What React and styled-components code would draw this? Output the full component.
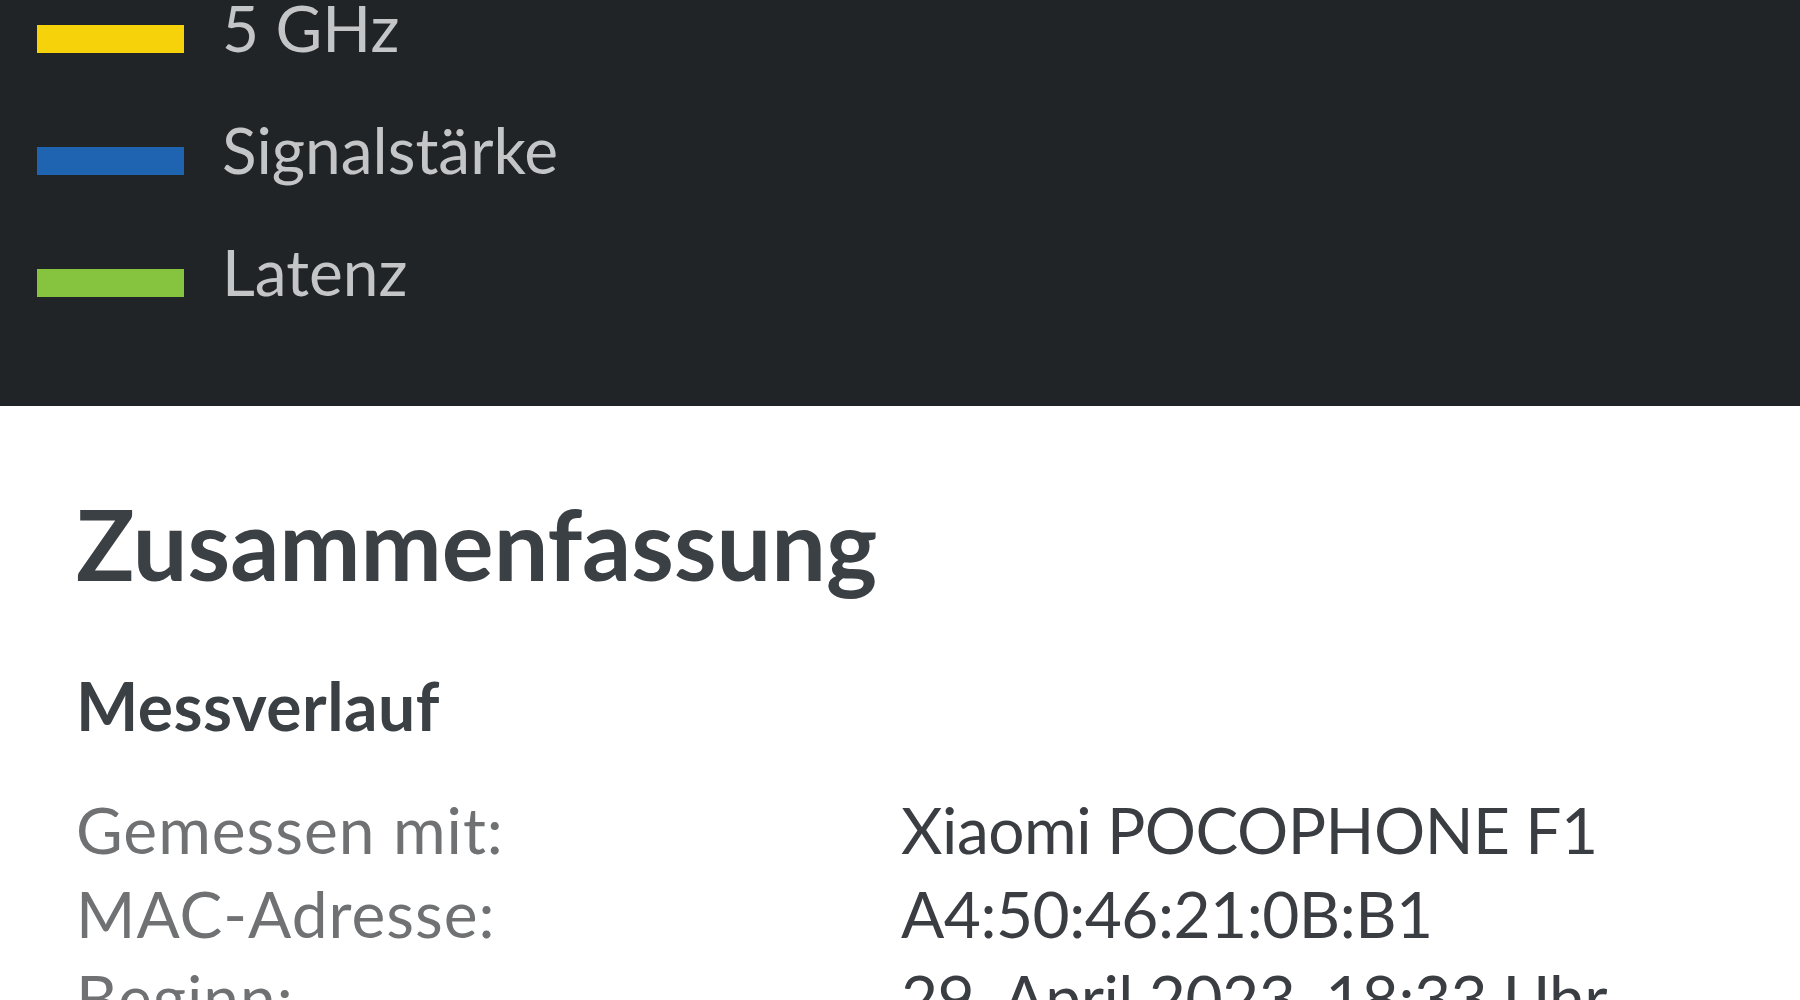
import React from 'react'
import styled, { createGlobalStyle } from 'styled-components'

const GlobalStyle = createGlobalStyle`
	html, body {
		margin: 0;
		padding: 0;
		background: #ffffff;
		overflow: hidden;
	}
	body {
		font-family: Lato, 'Noto Sans', sans-serif;
	}
`

const Page = styled.div`
	width: 1800px;
	height: 1000px;
	overflow: hidden;
`

const LegendPanel = styled.section`
	background: #212427;
	padding: 0 0 73px 37px;
	overflow: hidden;
`

const LegendList = styled.ul`
	list-style: none;
	margin: -33px 0 0;
	padding: 0;
`

const LegendItem = styled.li`
	display: flex;
	align-items: center;
	gap: 38px;
	height: 122px;
	font-size: 64px;
	line-height: 122px;
	color: #c4c5c7;
`

const Swatch = styled.span`
	display: block;
	flex: none;
	width: 147px;
	height: 28px;
	margin-top: 22px;
	background: ${props => props.color};
`

const Summary = styled.section`
	padding: 80px 0 0 76px;
`

const Title = styled.h1`
	margin: 0;
	font-size: 97px;
	font-weight: 700;
	line-height: 1.2;
	color: #3b4045;
`

const SubTitle = styled.h2`
	margin: 64px 0 0;
	font-size: 66px;
	font-weight: 700;
	line-height: 1.2;
	letter-spacing: 0.5px;
	color: #3b4045;
`

const InfoGrid = styled.dl`
	display: grid;
	grid-template-columns: 825px 1fr;
	margin: 42px 0 0;
	font-size: 64px;
	line-height: 84px;
`

const Label = styled.dt`
	margin: 0;
	color: #6f7173;
	letter-spacing: 1px;
`

const Value = styled.dd`
	margin: 0;
	color: #3a3e42;
	letter-spacing: -0.5px;
`

const legend = [
	{ label: '5 GHz', color: '#f6d20a' },
	{ label: 'Signalstärke', color: '#1e64b0' },
	{ label: 'Latenz', color: '#86c440' },
]

const info = [
	['Gemessen mit:', 'Xiaomi POCOPHONE F1'],
	['MAC-Adresse:', 'A4:50:46:21:0B:B1'],
	['Beginn:', '29. April 2023, 18:33 Uhr'],
]

const App = () => (
	<>
		<GlobalStyle />
		<Page>
			<LegendPanel>
				<LegendList>
					{legend.map(item => (
						<LegendItem key={item.label}>
							<Swatch color={item.color} />
							{item.label}
						</LegendItem>
					))}
				</LegendList>
			</LegendPanel>
			<Summary>
				<Title>Zusammenfassung</Title>
				<SubTitle>Messverlauf</SubTitle>
				<InfoGrid>
					{info.map(([label, value]) => (
						<React.Fragment key={label}>
							<Label>{label}</Label>
							<Value>{value}</Value>
						</React.Fragment>
					))}
				</InfoGrid>
			</Summary>
		</Page>
	</>
)

export default App
